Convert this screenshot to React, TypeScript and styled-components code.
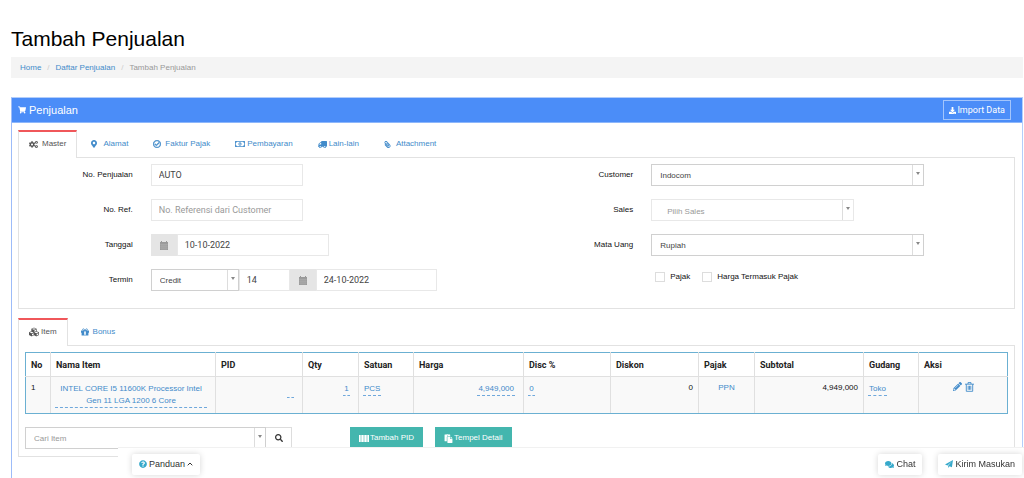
import React from "react";
import styled, { createGlobalStyle, css } from "styled-components";
import {
  FaShoppingCart, FaDownload, FaCogs, FaMapMarkerAlt, FaRegCheckCircle, FaRegMoneyBillAlt, FaTruck,
  FaPaperclip, FaCubes, FaSearch, FaPaste, FaQuestionCircle, FaComments, FaPencilAlt,
} from "react-icons/fa";

const Global = createGlobalStyle`
  *, *::before, *::after { box-sizing: border-box; }
  body { margin: 0; background: #fff; color: #333; font: 8px/12px "Liberation Sans", Arial, sans-serif; }
  input, select, button { font: inherit; color: inherit; border-radius: 0; margin: 0; }
  a { color: #428bca; text-decoration: none; }
  svg { flex: none; }
`;

const roboto = css`font-family: Roboto, "Liberation Sans", sans-serif;`;

const Page = styled.div`
  min-height: 100vh;
  display: flex;
  flex-direction: column;
  padding: 26px 1px 0 11px;
`;
const Title = styled.h1`
  margin: 0 0 6px;
  font-size: 21px;
  line-height: 25px;
  font-weight: 400;
  color: #000;
`;
const Breadcrumb = styled.ol`
  list-style: none;
  display: flex;
  align-items: center;
  margin: 0 0 19px;
  padding: 0 9px;
  height: 21px;
  background: #f4f4f4;
  color: #999;
  li + li::before { content: "/"; color: #ccc; padding: 0 6px; }
`;
const Panel = styled.section`
  flex: 1;
  border: 1px solid #b3cefb;
  border-left-color: #9dbcf9;
  border-bottom: 0;
`;
const PanelHeader = styled.header`
  display: flex;
  align-items: center;
  justify-content: space-between;
  height: 25px;
  padding: 0 11px 0 6px;
  background: #4b8df8;
  border-bottom: 1px solid #8db7fb;
  color: #fff;
`;
const PanelTitle = styled.h2`
  display: flex;
  align-items: center;
  gap: 3px;
  margin: 0;
  font-size: 11px;
  font-weight: 400;
`;
const ImportButton = styled.button`
  ${roboto}
  font-size: 9px;
  display: flex;
  align-items: center;
  gap: 1px;
  height: 20px;
  padding: 0 5px;
  border: 1px solid #a3c5fc;
  background: transparent;
`;
const PanelBody = styled.div`padding: 7px 7px 0 6px;`;

const Tabs = styled.nav`
  display: flex;
  height: 28px;
  margin-bottom: -1px;
`;
const Tab = styled.button<{ $active?: boolean; $gap?: number }>`
  position: relative;
  display: flex;
  align-items: center;
  gap: ${(p) => p.$gap ?? 4}px;
  padding: 0 12px;
  border: 0;
  background: transparent;
  color: #428bca;
  margin-right: 1px;
  ${(p) => p.$active && css`
    padding: 0 10px 2px;
    background: #fff;
    color: #555;
    border: 1px solid #e2e2e2;
    border-top: 2px solid #f0575a;
    border-bottom: 0;
  `}
`;
const TabPane = styled.div`
  border: 1px solid #e2e2e2;
  margin-bottom: 9px;
`;

const FormGrid = styled(TabPane)`
  display: grid;
  grid-template-columns: 1fr 1fr;
  column-gap: 6px;
  padding: 6px 0 17px;
`;
const Fields = styled.div`
  display: flex;
  flex-direction: column;
  gap: 13px;
`;
const Field = styled.div`
  display: grid;
  grid-template-columns: 23% 1fr;
  column-gap: 18px;
  align-items: center;
`;
const FieldLabel = styled.label`
  text-align: right;
  color: #111;
`;
const Controls = styled.div`display: flex;`;
const TextInput = styled.input<{ $w: number }>`
  ${roboto}
  width: ${(p) => p.$w}px;
  height: 22px;
  padding: 0 7px;
  border: 1px solid #e8e8e8;
  background: #fff;
  color: #444;
  outline: 0;
  font-size: 9px;
  &::placeholder { color: #999; opacity: 1; }
`;
const Addon = styled.span`
  display: flex;
  align-items: center;
  justify-content: center;
  width: 26px;
  height: 22px;
  background: #e5e5e5;
`;
const SelectBox = styled.span<{ $w: number; $light?: boolean }>`
  display: flex;
  position: relative;
  width: ${(p) => p.$w}px;
  height: 22px;
  border: 1px solid ${(p) => (p.$light ? "#e8e8e8" : "#d0d0d0")};
  background: #fff;
  &::before {
    content: "";
    position: absolute;
    inset: 0 0 0 auto;
    width: 11px;
    border-left: 1px solid #ddd;
    pointer-events: none;
  }
  &::after {
    content: "";
    position: absolute;
    right: 3px;
    top: 7px;
    border: 2px solid transparent;
    border-top: 3px solid #888;
    border-bottom: 0;
    pointer-events: none;
  }
`;
const Select = styled.select<{ $muted?: boolean; $indent?: boolean }>`
  appearance: none;
  flex: 1;
  min-width: 0;
  border: 0;
  outline: 0;
  background: transparent;
  padding: ${(p) => (p.$indent ? "4px 14px 0 15px" : "1px 12px 0 8px")};
  color: ${(p) => (p.$muted ? "#999" : "#444")};
`;
const Checks = styled.div`
  display: flex;
  gap: 12px;
  padding-left: 4px;
  height: 16px;
  align-items: center;
`;
const CheckLabel = styled.label`
  display: flex;
  align-items: center;
  gap: 5px;
  color: #111;
`;
const Check = styled.input`
  appearance: none;
  width: 10px;
  height: 10px;
  border: 1px solid #ddd;
  background: #fff;
`;

const ItemPane = styled(TabPane)`
  padding: 6px 6px 7px;
`;
const Table = styled.table`
  width: 100%;
  table-layout: fixed;
  border-collapse: collapse;
  border: 1px solid #6bb0d2;
  margin-bottom: 13px;
`;
const Th = styled.th`
  ${roboto}
  height: 24px;
  padding: 0 5px;
  border: 1px solid #e0e0e0;
  border-top-color: #6bb0d2;
  font-size: 9px;
  font-weight: 700;
  color: #222;
  text-align: left;
  &:first-child { border-left-color: #6bb0d2; }
  &:last-child { border-right-color: #6bb0d2; }
`;
const Td = styled.td<{ $align?: "left" | "center" | "right"; $edit?: boolean }>`
  height: 37px;
  padding: ${(p) => (p.$edit ? "6px 8px 0 4px" : "5px 5px 0")};
  vertical-align: top;
  border: 1px solid #e0e0e0;
  border-bottom-color: #6bb0d2;
  background: #f9f9f9;
  color: #111;
  text-align: ${(p) => p.$align ?? "left"};
  &:first-child { border-left-color: #6bb0d2; }
  &:last-child { border-right-color: #6bb0d2; }
`;
const Editable = styled.a`
  display: inline-block;
  min-width: 7px;
  line-height: 12px;
  padding: 0 1px;
  border-bottom: 1px dashed #6fa8dc;
  text-align: center;
`;
const EmptyEditable = styled(Editable)`margin-top: 2px;`;
const RowActions = styled.span`
  display: flex;
  justify-content: center;
  gap: 3px;
  color: #428bca;
`;
const IconButton = styled.button`
  display: flex;
  padding: 0;
  border: 0;
  background: transparent;
`;
const Toolbar = styled.div`
  display: flex;
  align-items: center;
`;
const SearchButton = styled.button`
  display: flex;
  align-items: center;
  justify-content: center;
  width: 26px;
  height: 22px;
  margin-right: 58px;
  border: 1px solid #ddd;
  border-left: 0;
  background: #fff;
`;
const TealButton = styled.button`
  display: flex;
  align-items: center;
  gap: 1px;
  height: 22px;
  padding: 0 9px;
  margin-right: 12px;
  border: 0;
  background: #44b6ae;
  color: #fff;
`;

const BottomBar = styled.footer`
  position: fixed;
  right: 0;
  bottom: 0;
  left: 118px;
  height: 31px;
  display: flex;
  align-items: center;
  gap: 16px;
  padding: 2px 2px 0 14px;
  border-top: 1px solid #f1f1f1;
  background: #fff;
`;
const FloatButton = styled.button`
  font-size: 9px;
  display: flex;
  align-items: center;
  gap: 2px;
  height: 21px;
  padding: 0 7px;
  border: 0;
  border-radius: 2px;
  background: #fff;
  box-shadow: 0 0 6px rgba(0, 0, 0, 0.16);
  &:first-child { margin-right: auto; }
`;
const Accent = styled.span`
  display: flex;
  color: #36a9cb;
`;
const Mirror = styled.span`
  display: flex;
  transform: scaleX(-1);
`;

const Calendar = () => (
  <svg width="8" height="9" viewBox="0 0 8 9" fill="#999">
    <path d="M0 1h1V0h1v1h4V0h1v1h1v8H0z" />
    <path d="M0 3.3h8M0 5.2h8M0 7.1h8M2 3v6M4 3v6M6 3v6" stroke="#bbb" strokeWidth=".4" />
  </svg>
);
const Barcode = () => (
  <svg width="10" height="7" viewBox="0 0 10 7" fill="currentColor">
    <path d="M0 0h1v7H0zM1.3 0h.9v7h-.9zM2.5 0h1.800v7H2.500zM4.600 0h.9v7h-.9zM5.800 0h1.600v7H5.800zM7.700 0h.8v7h-.8zM8.800 0H10v7H8.800z" />
  </svg>
);
const Gift = () => (
  <svg width="8" height="8" viewBox="0 0 8 8" fill="currentColor">
    <path d="M0 2.500h3.200V7.500H.6V4.800H0zM4.800 2.500H8v2.300H7.400v2.700H4.800z" />
    <path d="M3.200 2.500h1.600v1H3.200zM3.200 6.700h1.600v.8H3.200z" />
    <path d="M4 2.500Q3.300.8 2.400.8 1.600.8 1.600 1.600 1.600 2.500 2.700 2.500zM4 2.500Q4.700.8 5.600.8 6.400.8 6.400 1.600 6.400 2.500 5.300 2.500z" fill="none" stroke="currentColor" strokeWidth=".8" />
  </svg>
);
const Trash = () => (
  <svg width="9" height="10" viewBox="0 0 9 10" fill="none" stroke="currentColor">
    <path d="M0 2.200h9M3 2V.6h3V2M1.300 2.200V9.300h6.400V2.200M3.200 3.800v4M4.500 3.800v4M5.800 3.800v4" strokeWidth=".9" />
  </svg>
);
const Plane = () => (
  <svg width="8" height="8" viewBox="0 0 8 8" fill="currentColor">
    <path d="M8 0L6.900 7.200 4.500 6.200 3.200 8V5.800L7 1.300 2.500 5.500 0 4.500z" />
  </svg>
);
const CaretUp = () => (
  <svg width="6" height="4" viewBox="0 0 6 4" fill="none" stroke="currentColor">
    <path d="M.7 3.300L3 1l2.300 2.300" />
  </svg>
);

const masterTabs = [
  { label: "Master", icon: <FaCogs size={9} />, active: true },
  { label: "Alamat", icon: <FaMapMarkerAlt size={8} />, gap: 5 },
  { label: "Faktur Pajak", icon: <FaRegCheckCircle size={8} strokeWidth={30} stroke="currentColor" /> },
  { label: "Pembayaran", icon: <FaRegMoneyBillAlt size={10} />, gap: 2 },
  { label: "Lain-lain", icon: <Mirror><FaTruck size={9} /></Mirror>, gap: 2 },
  { label: "Attachment", icon: <Mirror><FaPaperclip size={7} /></Mirror>, gap: 5 },
];

const columns: [string, number][] = [
  ["No", 25], ["Nama Item", 165], ["PID", 87], ["Qty", 56], ["Satuan", 55], ["Harga", 110],
  ["Disc %", 87], ["Diskon", 88], ["Pajak", 56], ["Subtotal", 109], ["Gudang", 55], ["Aksi", 89],
];
const Col = styled.col<{ $share: number }>`width: ${(p) => (p.$share * 100) / 982}%;`;

export default function App() {
  return (
    <>
      <Global />
      <Page>
        <Title>Tambah Penjualan</Title>
        <Breadcrumb>
          <li><a href="#home">Home</a></li>
          <li><a href="#daftar">Daftar Penjualan</a></li>
          <li>Tambah Penjualan</li>
        </Breadcrumb>
        <Panel>
          <PanelHeader>
            <PanelTitle><FaShoppingCart size={8} />Penjualan</PanelTitle>
            <ImportButton><FaDownload size={7} />Import Data</ImportButton>
          </PanelHeader>
          <PanelBody>
            <Tabs>
              {masterTabs.map((t) => (
                <Tab key={t.label} $active={t.active} $gap={t.gap}>{t.icon}{t.label}</Tab>
              ))}
            </Tabs>
            <FormGrid>
              <Fields>
                <Field>
                  <FieldLabel htmlFor="no">No. Penjualan</FieldLabel>
                  <Controls><TextInput id="no" $w={152} defaultValue="AUTO" /></Controls>
                </Field>
                <Field>
                  <FieldLabel htmlFor="ref">No. Ref.</FieldLabel>
                  <Controls><TextInput id="ref" $w={152} placeholder="No. Referensi dari Customer" /></Controls>
                </Field>
                <Field>
                  <FieldLabel htmlFor="tanggal">Tanggal</FieldLabel>
                  <Controls><Addon><Calendar /></Addon><TextInput id="tanggal" $w={152} defaultValue="10-10-2022" /></Controls>
                </Field>
                <Field>
                  <FieldLabel htmlFor="termin">Termin</FieldLabel>
                  <Controls>
                    <SelectBox $w={88}><Select id="termin"><option>Credit</option></Select></SelectBox>
                    <TextInput aria-label="Hari" $w={51} defaultValue="14" />
                    <Addon><Calendar /></Addon>
                    <TextInput aria-label="Jatuh tempo" $w={121} defaultValue="24-10-2022" />
                  </Controls>
                </Field>
              </Fields>
              <Fields>
                <Field>
                  <FieldLabel htmlFor="customer">Customer</FieldLabel>
                  <SelectBox $w={273}><Select id="customer"><option>Indocom</option></Select></SelectBox>
                </Field>
                <Field>
                  <FieldLabel htmlFor="sales">Sales</FieldLabel>
                  <SelectBox $w={203} $light><Select id="sales" $muted $indent><option>Pilih Sales</option></Select></SelectBox>
                </Field>
                <Field>
                  <FieldLabel htmlFor="mata">Mata Uang</FieldLabel>
                  <SelectBox $w={273}><Select id="mata"><option>Rupiah</option></Select></SelectBox>
                </Field>
                <Field>
                  <span />
                  <Checks>
                    <CheckLabel><Check type="checkbox" />Pajak</CheckLabel>
                    <CheckLabel><Check type="checkbox" />Harga Termasuk Pajak</CheckLabel>
                  </Checks>
                </Field>
              </Fields>
            </FormGrid>
            <Tabs>
              <Tab $active $gap={2}><FaCubes size={10} />Item</Tab>
              <Tab><Gift />Bonus</Tab>
            </Tabs>
            <ItemPane>
              <Table>
                <colgroup>{columns.map(([name, share]) => <Col key={name} $share={share} />)}</colgroup>
                <thead>
                  <tr>{columns.map(([name]) => <Th key={name}>{name}</Th>)}</tr>
                </thead>
                <tbody>
                  <tr>
                    <Td>1</Td>
                    <Td $edit><Editable href="#item">INTEL CORE I5 11600K Processor Intel Gen 11 LGA 1200 6 Core</Editable></Td>
                    <Td $edit $align="right"><EmptyEditable href="#pid" aria-label="PID">&nbsp;</EmptyEditable></Td>
                    <Td $edit $align="right"><Editable href="#qty">1</Editable></Td>
                    <Td $edit><Editable href="#satuan">PCS</Editable></Td>
                    <Td $edit $align="right"><Editable href="#harga">4,949,000</Editable></Td>
                    <Td $edit><Editable href="#disc">0</Editable></Td>
                    <Td $align="right">0</Td>
                    <Td $align="center"><a href="#ppn">PPN</a></Td>
                    <Td $align="right">4,949,000</Td>
                    <Td $edit><Editable href="#gudang">Toko</Editable></Td>
                    <Td>
                      <RowActions>
                        <IconButton aria-label="Edit"><FaPencilAlt size={9} /></IconButton>
                        <IconButton aria-label="Hapus"><Trash /></IconButton>
                      </RowActions>
                    </Td>
                  </tr>
                </tbody>
              </Table>
              <Toolbar>
                <SelectBox $w={241}>
                  <Select aria-label="Cari Item" $muted><option>Cari Item</option></Select>
                </SelectBox>
                <SearchButton aria-label="Cari"><FaSearch size={8} /></SearchButton>
                <TealButton><Barcode />Tambah PID</TealButton>
                <TealButton><FaPaste size={9} />Tempel Detail</TealButton>
              </Toolbar>
            </ItemPane>
          </PanelBody>
        </Panel>
      </Page>
      <BottomBar>
        <FloatButton><Accent><FaQuestionCircle size={8} /></Accent>Panduan<CaretUp /></FloatButton>
        <FloatButton><Accent><FaComments size={9} /></Accent>Chat</FloatButton>
        <FloatButton><Accent><Plane /></Accent>Kirim Masukan</FloatButton>
      </BottomBar>
    </>
  );
}
